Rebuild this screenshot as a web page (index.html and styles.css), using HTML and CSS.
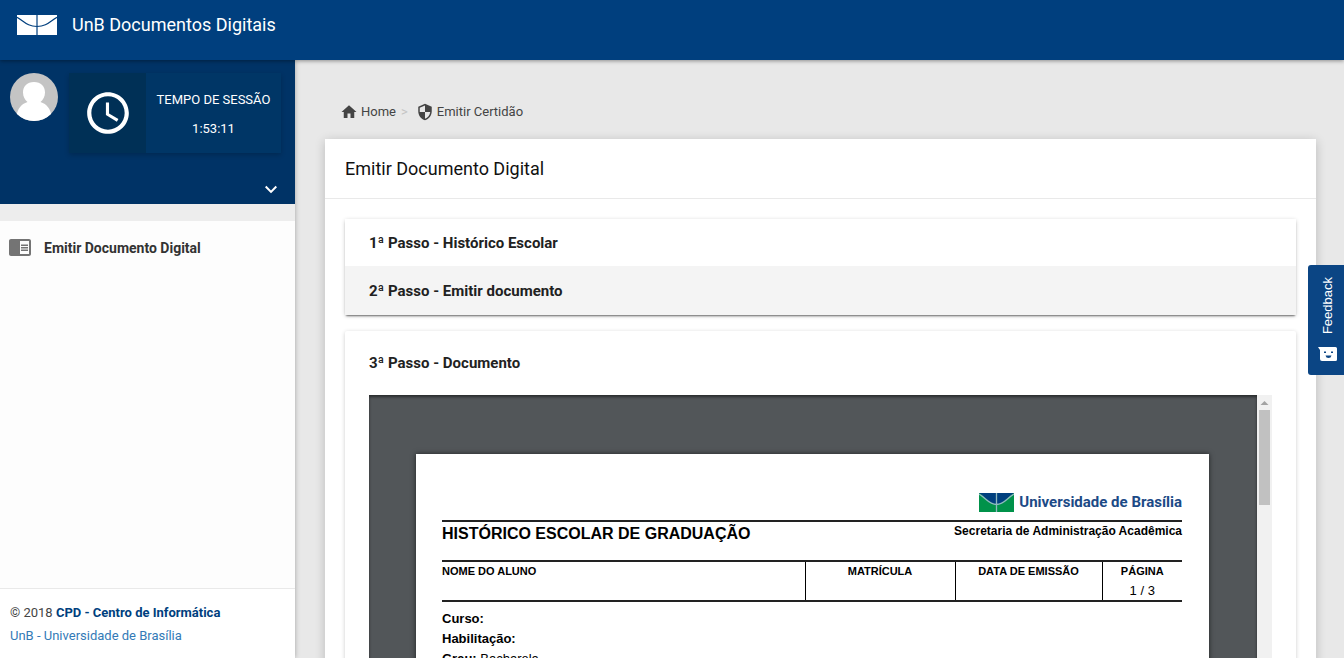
FILE: index.html
```html
<!DOCTYPE html>
<html lang="pt-BR">
<head>
<meta charset="utf-8">
<meta name="viewport" content="width=device-width, initial-scale=1">
<title>UnB Documentos Digitais</title>
<link rel="stylesheet" href="styles.css">
</head>
<body>
<header class="topbar">
  <svg class="brand-logo" viewBox="0 0 40 20" aria-hidden="true">
    <rect width="40" height="20" fill="#fff"/>
    <path d="M0 2.2C7 6 10 11.5 20 11.5S33 6 40 2.2M20 0V20" fill="none" stroke="#003f7e" stroke-width="1.2"/>
  </svg>
  <span class="brand-name">UnB Documentos Digitais</span>
</header>
<div class="shell">
  <aside class="sidebar">
    <section class="profile">
      <div class="profile-row">
        <svg class="avatar" viewBox="0 0 48 48" role="img" aria-label="Usuário">
          <defs><clipPath id="avatar-clip"><circle cx="24" cy="24" r="24"/></clipPath></defs>
          <g clip-path="url(#avatar-clip)">
            <rect width="48" height="48" fill="#c4c4c4"/>
            <path d="M24 9c7 0 11 4.500 11 10.500 0 4-2 7.500-4.500 9.500C37 31 40.500 36 41.500 43V50H6.500V43C7.500 36 11 31 17.500 29 15 27 13 23.500 13 19.500 13 13.500 17 9 24 9Z" fill="#fff"/>
          </g>
        </svg>
        <div class="session">
          <div class="session-icon">
            <svg viewBox="0 0 24 24" width="50" height="50" fill="#fff" aria-hidden="true"><path d="M11.990 2C6.470 2 2 6.480 2 12s4.470 10 9.990 10C17.520 22 22 17.520 22 12S17.520 2 11.990 2zM12 20c-4.420 0-8-3.580-8-8s3.580-8 8-8 8 3.580 8 8-3.580 8-8 8zm.5-13H11v6l5.250 3.150.75-1.230-4.500-2.670z"/></svg>
          </div>
          <div class="session-text"><span>TEMPO DE SESSÃO</span><span>1:53:11</span></div>
        </div>
      </div>
      <button class="expand" type="button" aria-label="Expandir perfil">
        <svg viewBox="0 0 24 24" width="24" height="24" fill="#fff" aria-hidden="true"><path d="M7.410 7.840L12 12.420l4.590-4.580L18 9.250l-6 6-6-6z"/></svg>
      </button>
    </section>
    <nav class="menu">
      <a class="menu-link" href="#">
        <svg viewBox="0 0 24 24" width="24" height="24" fill="#747474" aria-hidden="true"><path d="M13 12h7v1.500h-7zm0-2.500h7V11h-7zm0 5h7V16h-7zM21 4H3c-1.100 0-2 .9-2 2v13c0 1.100.9 2 2 2h18c1.100 0 2-.9 2-2V6c0-1.100-.9-2-2-2zm0 15h-9V6h9v13z"/></svg>
        <span>Emitir Documento Digital</span>
      </a>
    </nav>
    <footer class="legal">
      <div>© 2018 <a class="legal-strong" href="#">CPD - Centro de Informática</a></div>
      <div><a class="legal-link" href="#">UnB - Universidade de Brasília</a></div>
    </footer>
  </aside>
  <main class="content">
    <nav class="crumbs" aria-label="Navegação">
      <a class="crumb" href="#">
        <svg viewBox="0 0 24 24" width="18" height="18" fill="#444" aria-hidden="true"><path d="M10 20v-6h4v6h5v-8h3L12 3 2 12h3v8z"/></svg>
        Home
      </a>
      <span class="crumb-sep">&gt;</span>
      <a class="crumb" href="#">
        <svg viewBox="0 0 24 24" width="18" height="18" fill="#444" aria-hidden="true"><path d="M12 1L3 5v6c0 5.550 3.840 10.740 9 12 5.160-1.260 9-6.450 9-12V5l-9-4zm0 10.990h7c-.53 4.120-3.280 7.790-7 8.940V12H5V6.300l7-3.110v8.800z"/></svg>
        Emitir Certidão
      </a>
    </nav>
    <section class="card">
      <h1 class="card-title">Emitir Documento Digital</h1>
      <div class="card-body">
        <div class="steps">
          <button class="step" type="button">1ª Passo - Histórico Escolar</button>
          <button class="step step-active" type="button">2ª Passo - Emitir documento</button>
        </div>
        <section class="step-open">
          <h2 class="step-title">3ª Passo - Documento</h2>
          <div class="viewer">
            <div class="viewer-pages">
              <article class="sheet">
                <div class="sheet-brand">
                  <svg viewBox="0 0 35 19" width="35" height="19" aria-hidden="true">
                    <rect width="35" height="19" fill="#00924a"/>
                    <path d="M0 0H35C28 4 25 11 17.500 11S7 4 0 0Z" fill="#003f7e"/>
                    <path d="M0 1C7 5 10 11.500 17.500 11.500S28 5 35 1M17.500 0V19" fill="none" stroke="#8fb9c0" stroke-width="1.300"/>
                  </svg>
                  <span>Universidade de Brasília</span>
                </div>
                <div class="sheet-head">
                  <h3 class="sheet-title">HISTÓRICO ESCOLAR DE GRADUAÇÃO</h3>
                  <span class="sheet-unit">Secretaria de Administração Acadêmica</span>
                </div>
                <table class="sheet-table">
                  <colgroup><col class="col-name"><col class="col-id"><col class="col-date"><col class="col-page"></colgroup>
                  <thead><tr><th>NOME DO ALUNO</th><th>MATRÍCULA</th><th>DATA DE EMISSÃO</th><th>PÁGINA</th></tr></thead>
                  <tbody><tr><td></td><td></td><td></td><td>1 / 3</td></tr></tbody>
                </table>
                <div class="sheet-fields">
                  <div><b>Curso:</b></div>
                  <div><b>Habilitação:</b></div>
                  <div><b>Grau:</b> Bacharela</div>
                </div>
              </article>
            </div>
            <div class="scroll">
              <svg viewBox="0 0 15 15" width="15" height="15" aria-hidden="true"><path d="M3.500 10L7.500 6L11.500 10Z" fill="#a3a3a3"/></svg>
              <div class="scroll-thumb"></div>
            </div>
          </div>
        </section>
      </div>
    </section>
  </main>
</div>
<button class="feedback" type="button">
  <span class="feedback-label">Feedback</span>
  <svg viewBox="0 0 20 14" width="20" height="14" aria-hidden="true">
    <path d="M0 0H17.500Q19 0 19 1.500V12.500Q19 14 17.500 14H4Q2 14 2 12V3Z" fill="#fff"/>
    <path d="M6 4.500h2v1.500H6zM13 4.500h2v1.500h-2zM7.500 8.500h6q-.5 2.500-3 2.500t-3-2.500z" fill="#0b4584"/>
  </svg>
</button>
</body>
</html>
```
FILE: styles.css
```css
* { box-sizing: border-box; }

body {
  margin: 0;
  height: 100vh;
  overflow: hidden;
  display: flex;
  flex-direction: column;
  background: #e8e8e8;
  color: #222;
  font: 13px/20px Roboto, sans-serif;
}

a { text-decoration: none; color: inherit; }
button { border: 0; margin: 0; font: inherit; color: inherit; cursor: pointer; }
svg { display: block; flex: none; }
h1, h2, h3 { margin: 0; }

.topbar {
  position: relative;
  z-index: 3;
  flex: none;
  display: flex;
  align-items: flex-start;
  gap: 15px;
  height: 60px;
  padding: 15px 17px;
  background: #003f7e;
  color: #fff;
  box-shadow: 0 1px 4px rgba(0, 0, 0, .4);
}
.brand-logo { width: 40px; height: 20px; }
.brand-name { font-size: 18px; line-height: 20px; }

.shell { flex: 1; min-height: 0; display: flex; }

.sidebar {
  position: relative;
  z-index: 2;
  flex: none;
  width: 295px;
  display: flex;
  flex-direction: column;
  background: #fdfdfd;
  box-shadow: 0 0 5px rgba(0, 0, 0, .3);
}
.profile {
  display: flex;
  flex-direction: column;
  justify-content: space-between;
  height: 144px;
  padding: 13px 12px 2px 10px;
  background: #003366;
  color: #fff;
}
.profile-row { display: flex; gap: 11px; }
.avatar { width: 48px; height: 48px; }
.session {
  flex: none;
  display: flex;
  width: 212px;
  height: 80px;
  background: #003666;
  box-shadow: 0 2px 5px rgba(0, 0, 0, .2);
}
.session-icon {
  display: grid;
  place-items: center;
  width: 77px;
  background: #003056;
}
.session-text {
  flex: 1;
  display: flex;
  flex-direction: column;
  justify-content: center;
  gap: 9px;
  padding-top: 2px;
  text-align: center;
}
.expand { align-self: flex-end; padding: 0; background: none; }

.menu {
  flex: 1;
  padding-top: 14px;
  border-top: 17px solid #ededed;
}
.menu-link {
  display: flex;
  align-items: flex-start;
  gap: 12px;
  padding: 0 8px;
  color: #333;
  font-size: 14px;
  font-weight: 700;
  line-height: 26px;
}
.legal {
  padding: 12px 10px 11px;
  border-top: 1px solid #e9e9e9;
  background: #fff;
  line-height: 23px;
  color: #444;
}
.legal-strong { color: #003f7e; font-weight: 700; }
.legal-link { color: #337ab7; }

.content { flex: 1; min-width: 0; padding: 40px 28px 0 30px; }
.crumbs {
  display: flex;
  align-items: center;
  padding: 2px 15px 17px;
  color: #444;
}
.crumb { display: flex; align-items: center; gap: 3px; }
.crumb-sep { padding: 0 8px 0 5px; color: #c4c4c4; }

.card { background: #fff; box-shadow: 0 2px 10px rgba(0, 0, 0, .2); }
.card-title {
  padding: 20px 20px 19px;
  border-bottom: 1px solid #e9e9e9;
  color: #111;
  font-size: 18px;
  font-weight: 400;
  line-height: 20px;
}
.card-body { padding: 20px; }

.steps, .step-open { border-radius: 2px; box-shadow: 0 1px 4px rgba(0, 0, 0, .2); }
.steps {
  display: flex;
  flex-direction: column;
  margin-bottom: 16px;
  box-shadow: 0 1px 4px rgba(0, 0, 0, .2), 0 2px 2px -1px rgba(0, 0, 0, .5);
}
.step {
  height: 47px;
  padding: 0 24px;
  background: #fff;
  color: #212121;
  font-size: 15px;
  font-weight: 700;
  text-align: left;
}
.step-active { height: 49px; background: #f4f4f4; }
.step-open { padding: 20px 24px 24px; }
.step-title { margin-bottom: 20px; font-size: 15px; line-height: 24px; }

.viewer { display: flex; height: 600px; }
.viewer-pages {
  flex: 1;
  display: flex;
  justify-content: center;
  align-items: flex-start;
  padding: 59px 1px 0 0;
  overflow: hidden;
  background: #525659;
  box-shadow: inset 0 2px 3px rgba(0, 0, 0, .5);
}
.scroll { flex: none; width: 15px; background: #f1f1f1; }
.scroll-thumb { height: 95px; margin: 0 2px; background: #c1c1c1; }

.sheet {
  flex: none;
  width: 793px;
  height: 1122px;
  padding: 39px 27px 39px 26px;
  background: #fff;
  color: #000;
  font-family: "Liberation Sans", Arial, sans-serif;
  box-shadow: 0 0 5px rgba(0, 0, 0, .6);
}
.sheet-brand {
  display: flex;
  justify-content: flex-end;
  align-items: center;
  gap: 5px;
  height: 19px;
  color: #1c4a86;
  font: 700 15px/19px Roboto, sans-serif;
}
.sheet-head {
  display: flex;
  justify-content: space-between;
  height: 40px;
  margin-top: 8px;
  border-top: 2px solid #222;
}
.sheet-title { font-size: 16px; line-height: 24px; }
.sheet-unit { font-size: 12px; font-weight: 700; line-height: 18px; }
.sheet-table {
  width: 100%;
  table-layout: fixed;
  border-collapse: collapse;
  border-top: 2px solid #222;
  border-bottom: 2px solid #222;
}
.col-id { width: 150px; }
.col-date { width: 147px; }
.col-page { width: 80px; }
.sheet-table th, .sheet-table td {
  height: 20px;
  padding: 0;
  border-left: 1px solid #000;
  text-align: center;
  vertical-align: top;
}
.sheet-table th { font-size: 11px; line-height: 18px; }
.sheet-table td { line-height: 19px; }
.sheet-table th:first-child, .sheet-table td:first-child { border-left: 0; text-align: left; }
.sheet-fields { padding-top: 7px; }

.feedback {
  position: fixed;
  z-index: 4;
  top: 265px;
  right: 0;
  display: flex;
  flex-direction: column;
  align-items: center;
  justify-content: space-between;
  width: 36px;
  height: 110px;
  padding: 12px 0 14px 3px;
  border-radius: 3px 0 0 3px;
  background: #0b4584;
  color: #fff;
  font: 13px/16px "Liberation Sans", Arial, sans-serif;
}
.feedback-label { writing-mode: vertical-rl; transform: rotate(180deg); }
```
